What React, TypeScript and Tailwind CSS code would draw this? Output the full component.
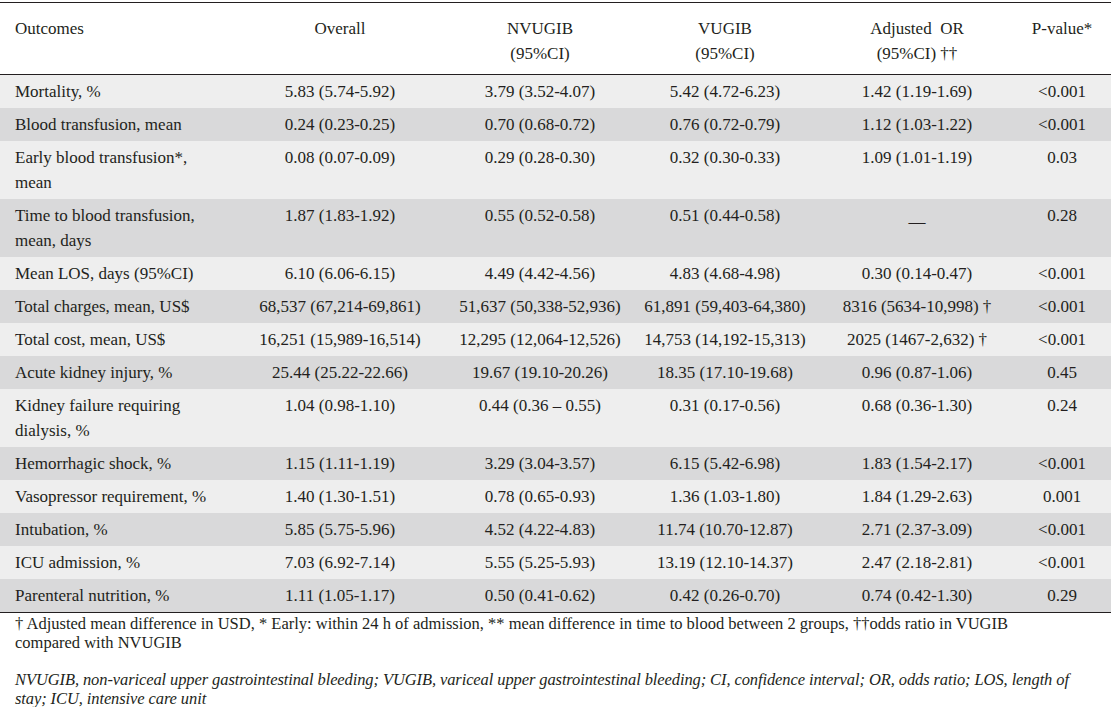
import React from "react";

type Row = {
  label: React.ReactNode;
  cells: React.ReactNode[];
};

const rows: Row[] = [
  { label: "Mortality, %", cells: ["5.83 (5.74-5.92)", "3.79 (3.52-4.07)", "5.42 (4.72-6.23)", "1.42 (1.19-1.69)", "<0.001"] },
  { label: "Blood transfusion, mean", cells: ["0.24 (0.23-0.25)", "0.70 (0.68-0.72)", "0.76 (0.72-0.79)", "1.12 (1.03-1.22)", "<0.001"] },
  {
    label: (
      <>
        Early blood transfusion*,
        <br />
        mean
      </>
    ),
    cells: ["0.08 (0.07-0.09)", "0.29 (0.28-0.30)", "0.32 (0.30-0.33)", "1.09 (1.01-1.19)", "0.03"],
  },
  {
    label: (
      <>
        Time to blood transfusion,
        <br />
        mean, days
      </>
    ),
    cells: [
      "1.87 (1.83-1.92)",
      "0.55 (0.52-0.58)",
      "0.51 (0.44-0.58)",
      <span className="relative top-[6px]">—</span>,
      "0.28",
    ],
  },
  { label: "Mean LOS, days (95%CI)", cells: ["6.10 (6.06-6.15)", "4.49 (4.42-4.56)", "4.83 (4.68-4.98)", "0.30 (0.14-0.47)", "<0.001"] },
  { label: "Total charges, mean, US$", cells: ["68,537 (67,214-69,861)", "51,637 (50,338-52,936)", "61,891 (59,403-64,380)", "8316 (5634-10,998) †", "<0.001"] },
  { label: "Total cost, mean, US$", cells: ["16,251 (15,989-16,514)", "12,295 (12,064-12,526)", "14,753 (14,192-15,313)", "2025 (1467-2,632) †", "<0.001"] },
  { label: "Acute kidney injury, %", cells: ["25.44 (25.22-22.66)", "19.67 (19.10-20.26)", "18.35 (17.10-19.68)", "0.96 (0.87-1.06)", "0.45"] },
  {
    label: (
      <>
        Kidney failure requiring
        <br />
        dialysis, %
      </>
    ),
    cells: ["1.04 (0.98-1.10)", "0.44 (0.36 – 0.55)", "0.31 (0.17-0.56)", "0.68 (0.36-1.30)", "0.24"],
  },
  { label: "Hemorrhagic shock, %", cells: ["1.15 (1.11-1.19)", "3.29 (3.04-3.57)", "6.15 (5.42-6.98)", "1.83 (1.54-2.17)", "<0.001"] },
  { label: "Vasopressor requirement, %", cells: ["1.40 (1.30-1.51)", "0.78 (0.65-0.93)", "1.36 (1.03-1.80)", "1.84 (1.29-2.63)", "0.001"] },
  { label: "Intubation, %", cells: ["5.85 (5.75-5.96)", "4.52 (4.22-4.83)", "11.74 (10.70-12.87)", "2.71 (2.37-3.09)", "<0.001"] },
  { label: "ICU admission, %", cells: ["7.03 (6.92-7.14)", "5.55 (5.25-5.93)", "13.19 (12.10-14.37)", "2.47 (2.18-2.81)", "<0.001"] },
  { label: "Parenteral nutrition, %", cells: ["1.11 (1.05-1.17)", "0.50 (0.41-0.62)", "0.42 (0.26-0.70)", "0.74 (0.42-1.30)", "0.29"] },
];

const grid = "grid grid-cols-[240px_200px_200px_170px_214px_87px]";

const App = () => {
  return (
    <div
      className="w-[1111px] h-[707px] overflow-hidden bg-white text-[#231f20] text-[17px] leading-[25px]"
      style={{ fontFamily: '"Liberation Serif", "Times New Roman", serif' }}
    >
      <div className="h-[2px]" />
      <div className="border-t-[1.5px] border-b-[1.5px] border-[#231f20]">
        {/* Header */}
        <div className={`${grid} h-[71px] pt-[13px] bg-white`}>
          <div className="pl-[15px]">Outcomes</div>
          <div className="text-center">Overall</div>
          <div className="text-center">
            NVUGIB
            <br />
            (95%CI)
          </div>
          <div className="text-center">
            VUGIB
            <br />
            (95%CI)
          </div>
          <div className="text-center">
            Adjusted&nbsp; OR
            <br />
            (95%CI) ††
          </div>
          <div className="text-center pr-[11px]">P-value*</div>
        </div>

        {/* Body */}
        <div className="border-t-[1.5px] border-[#231f20]">
          {rows.map((row, i) => (
            <div
              key={i}
              className={`${grid} pt-[4px] pb-[4px] ${i % 2 === 0 ? "bg-[#eeeeee]" : "bg-[#d9d9da]"}`}
            >
              <div className="pl-[15px] whitespace-nowrap">{row.label}</div>
              {row.cells.map((c, j) => (
                <div key={j} className={`text-center whitespace-nowrap ${j === 4 ? "pr-[11px]" : ""}`}>
                  {c}
                </div>
              ))}
            </div>
          ))}
        </div>
      </div>

      {/* Footnotes */}
      <div className="px-[15px] pt-[1px] text-[16.5px] leading-[19px] whitespace-nowrap">
        <p>
          † Adjusted mean difference in USD, * Early: within 24 h of admission, ** mean difference in time to blood between 2 groups, ††odds ratio in VUGIB
          <br />
          compared with NVUGIB
        </p>
        <p className="italic mt-[18px] tracking-[-0.1px]">
          NVUGIB, non-variceal upper gastrointestinal bleeding; VUGIB, variceal upper gastrointestinal bleeding; CI, confidence interval; OR, odds ratio; LOS, length of
          <br />
          stay; ICU, intensive care unit
        </p>
      </div>
    </div>
  );
};

export default App;
